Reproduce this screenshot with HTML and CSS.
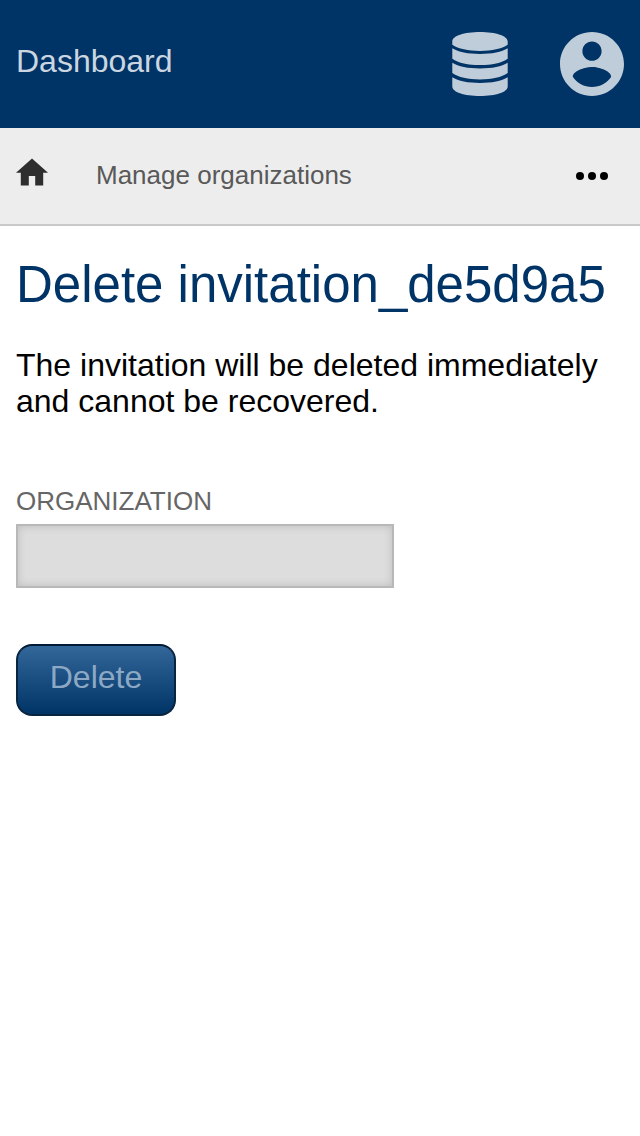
FILE: index.html
```html
<!DOCTYPE html>
<html lang="en">
<head>
  <meta charset="utf-8">
  <meta name="viewport" content="width=device-width, initial-scale=1">
  <title>Delete invitation</title>
  <link rel="stylesheet" href="styles.css">
</head>
<body>
  <header class="topbar">
    <a class="topbar-title" href="#">Dashboard</a>
    <nav class="topbar-actions" aria-label="Account">
      <a class="topbar-icon" href="#" aria-label="Data">
        <svg width="56" height="64" viewBox="0 0 56 64" fill="currentColor" aria-hidden="true">
          <path d="M.3 9.500C.3 4 12 0 28 0s27.700 4 27.700 9.500v3.200c-6 4-15.700 6.200-27.700 6.200s-21.700-2.200-27.700-6.200z"/>
          <path d="M.3 16.300c6 3.900 15.700 5.700 27.700 5.700s21.700-1.800 27.700-5.700v10.400c-6 4.300-15.700 6.400-27.700 6.400s-21.700-2.100-27.700-6.400z"/>
          <path d="M.3 30.700c6 3.900 15.700 5.700 27.700 5.700s21.700-1.800 27.700-5.700v10.400c-6 4.300-15.700 6.400-27.700 6.400s-21.700-2.100-27.700-6.400z"/>
          <path d="M.3 45.200c6 3.900 15.700 5.700 27.700 5.700s21.700-1.800 27.700-5.700v9.300C55.700 60 44 64 28 64S.3 60 .3 54.500z"/>
        </svg>
      </a>
      <a class="topbar-icon" href="#" aria-label="Profile">
        <svg width="64" height="64" viewBox="2 2 20 20" fill="currentColor" aria-hidden="true">
          <path d="M12 2C6.480 2 2 6.480 2 12s4.480 10 10 10 10-4.480 10-10S17.520 2 12 2zm0 3c1.660 0 3 1.340 3 3s-1.340 3-3 3-3-1.340-3-3 1.340-3 3-3zm0 14.200c-2.500 0-4.710-1.280-6-3.220.03-1.990 4-3.080 6-3.080 1.990 0 5.970 1.090 6 3.080-1.290 1.940-3.500 3.220-6 3.220z"/>
        </svg>
      </a>
    </nav>
  </header>
  <nav class="breadcrumb" aria-label="Breadcrumb">
    <a class="home" href="#" aria-label="Home">
      <svg width="32" height="28" viewBox="2 2.750 20 17.500" fill="currentColor" aria-hidden="true">
        <path d="M10 20v-6h4v6h5v-8h3L12 3 2 12h3v8z"/>
      </svg>
    </a>
    <a class="crumb" href="#">Manage organizations</a>
    <button class="more" type="button" aria-label="More">
      <svg width="32" height="8" viewBox="0 0 32 8" fill="currentColor" aria-hidden="true">
        <circle cx="4" cy="4" r="4"/><circle cx="16" cy="4" r="4"/><circle cx="28" cy="4" r="4"/>
      </svg>
    </button>
  </nav>
  <main class="content">
    <h1 class="title">Delete invitation_de5d9a5</h1>
    <p class="message">The invitation will be deleted immediately and cannot be recovered.</p>
    <form class="form">
      <label class="label" for="organization">Organization</label>
      <input class="field" id="organization" type="text" disabled>
      <button class="submit" type="submit" disabled>Delete</button>
    </form>
  </main>
</body>
</html>
```

FILE: styles.css
```css
* {
  box-sizing: border-box;
}

body {
  margin: 0;
  background: #fff;
  color: #000;
  font-family: "Liberation Sans", Arial, sans-serif;
  font-size: 32px;
  line-height: 36px;
}

a {
  color: inherit;
  text-decoration: none;
}

svg {
  display: block;
}

.topbar {
  display: flex;
  align-items: center;
  justify-content: space-between;
  padding: 32px 16px;
  background: #003366;
}

.topbar-title {
  padding-bottom: 6px;
  color: #ccd6e0;
}

.topbar-actions {
  display: flex;
  gap: 52px;
  color: #bfccd9;
}

.breadcrumb {
  display: flex;
  align-items: center;
  min-height: 98px;
  padding: 0 32px 0 16px;
  border-bottom: 2px solid #c8c8c8;
  background: #ededed;
}

.home {
  padding-bottom: 8px;
  color: #2e2e2e;
}

.crumb {
  margin-left: 48px;
  padding-bottom: 2px;
  color: #595959;
  font-size: 26px;
  line-height: 32px;
}

.more {
  margin-left: auto;
  padding: 0;
  border: 0;
  background: none;
  color: #000;
}

.content {
  padding: 29px 16px;
}

.title {
  margin: 0 0 32px;
  color: #003366;
  font-size: 51px;
  font-weight: 400;
  line-height: 60px;
}

.message {
  margin: 0 0 66px;
}

.form {
  display: flex;
  flex-direction: column;
  align-items: flex-start;
}

.label {
  margin-bottom: 7px;
  color: #666;
  font-size: 26px;
  line-height: 32px;
  text-transform: uppercase;
}

.field {
  width: 378px;
  max-width: 100%;
  height: 64px;
  margin-bottom: 56px;
  padding: 8px;
  border: 2px solid #b8b8b8;
  background: #ddd;
  box-shadow: inset 0 0 8px rgba(0, 0, 0, 0.15);
  font: inherit;
}

.submit {
  min-width: 160px;
  padding: 13px 31px 19px;
  border: 2px solid #0a2540;
  border-top-color: #001a33;
  border-radius: 16px;
  background: linear-gradient(#336699, #003366);
  color: #8ca8c4;
  font: inherit;
}
```
